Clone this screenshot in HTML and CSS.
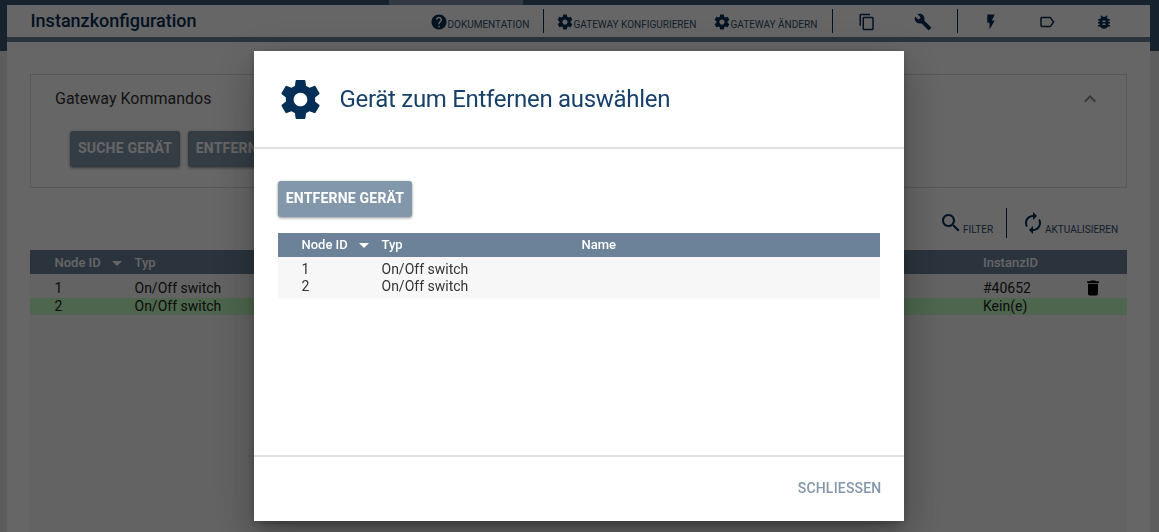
FILE: index.html
```html
<!DOCTYPE html>
<html lang="de">
<head>
<meta charset="utf-8">
<title>Instanzkonfiguration</title>
<link rel="stylesheet" href="styles.css">
</head>
<body>
<svg class="defs">
  <symbol id="gear" viewBox="0 0 24 24"><path d="M19.43 12.98c.04-.32.07-.64.07-.98s-.03-.66-.07-.98l2.11-1.65c.19-.15.24-.42.12-.64l-2-3.46c-.12-.22-.39-.3-.61-.22l-2.49 1c-.52-.4-1.08-.73-1.69-.98l-.38-2.65C14.46 2.18 14.25 2 14 2h-4c-.25 0-.46.18-.49.42l-.38 2.65c-.61.25-1.17.59-1.69.98l-2.49-1c-.23-.09-.49 0-.61.22l-2 3.46c-.13.22-.07.49.12.64l2.11 1.65c-.04.32-.07.65-.07.98s.03.66.07.98l-2.11 1.65c-.19.15-.24.42-.12.64l2 3.46c.12.22.39.3.61.22l2.49-1c.52.4 1.08.73 1.69.98l.38 2.65c.03.24.24.42.49.42h4c.25 0 .46-.18.49-.42l.38-2.65c.61-.25 1.17-.59 1.69-.98l2.49 1c.23.09.49 0 .61-.22l2-3.46c.12-.22.07-.49-.12-.64l-2.11-1.65zM12 15.5c-1.93 0-3.5-1.57-3.5-3.5s1.57-3.5 3.5-3.5 3.5 1.57 3.5 3.5-1.57 3.5-3.5 3.5z"/></symbol>
  <symbol id="help" viewBox="0 0 24 24"><path d="M12 2C6.48 2 2 6.48 2 12s4.480 10 10 10 10-4.480 10-10S17.520 2 12 2zm1 17h-2v-2h2v2zm2.070-7.750l-.9.920C13.450 12.900 13 13.500 13 15h-2v-.5c0-1.100.450-2.100 1.170-2.830l1.240-1.260c.370-.360.590-.860.590-1.410 0-1.100-.9-2-2-2s-2 .9-2 2H8c0-2.210 1.790-4 4-4s4 1.790 4 4c0 .880-.360 1.680-.930 2.250z"/></symbol>
  <symbol id="copy" viewBox="0 0 24 24"><path d="M16 1H4c-1.100 0-2 .9-2 2v14h2V3h12V1zm3 4H8c-1.100 0-2 .9-2 2v14c0 1.100.9 2 2 2h11c1.100 0 2-.9 2-2V7c0-1.100-.9-2-2-2zm0 16H8V7h11v14z"/></symbol>
  <symbol id="wrench" viewBox="0 0 24 24"><path d="M22.700 19l-9.100-9.100c.9-2.300.4-5-1.500-6.900-2-2-5-2.400-7.400-1.300L9 6 6 9 1.600 4.700C.4 7.100.9 10.100 2.900 12.100c1.900 1.900 4.600 2.400 6.900 1.500l9.100 9.100c.4.4 1 .4 1.400 0l2.300-2.300c.5-.4.5-1.100.1-1.400z"/></symbol>
  <symbol id="flash" viewBox="0 0 24 24"><path d="M7 2v11h3v9l7-12h-4l4-8z"/></symbol>
  <symbol id="label" viewBox="0 0 24 24"><path d="M17.630 5.840C17.270 5.330 16.670 5 16 5L5 5.010C3.900 5.010 3 5.900 3 7v10c0 1.100.9 1.990 2 1.990L16 19c.670 0 1.270-.330 1.630-.840L22 12l-4.370-6.160zM16 17H5V7h11l3.550 5L16 17z"/></symbol>
  <symbol id="bug" viewBox="0 0 24 24"><path d="M20 8h-2.810c-.45-.78-1.070-1.450-1.820-1.960L17 4.410 15.590 3l-2.170 2.170C12.960 5.060 12.490 5 12 5s-.96.060-1.410.170L8.410 3 7 4.410l1.620 1.630C7.880 6.550 7.260 7.220 6.810 8H4v2h2.090c-.05.33-.09.66-.09 1v1H4v2h2v1c0 .34.040.67.09 1H4v2h2.810c1.040 1.790 2.970 3 5.190 3s4.150-1.210 5.190-3H20v-2h-2.090c.05-.33.09-.66.09-1v-1h2v-2h-2v-1c0-.34-.04-.67-.09-1H20V8zm-6 8h-4v-2h4v2zm0-4h-4v-2h4v2z"/></symbol>
  <symbol id="up" viewBox="0 0 24 24"><path d="M12 8l-6 6 1.410 1.410L12 10.830l4.590 4.580L18 14z"/></symbol>
  <symbol id="search" viewBox="0 0 24 24"><path d="M15.500 14h-.79l-.28-.27C15.410 12.590 16 11.110 16 9.500 16 5.910 13.090 3 9.500 3S3 5.910 3 9.500 5.910 16 9.500 16c1.610 0 3.090-.59 4.230-1.570l.27.28v.79l5 4.990L20.490 19l-4.990-5zm-6 0C7.010 14 5 11.990 5 9.500S7.010 5 9.500 5 14 7.010 14 9.500 11.990 14 9.500 14z"/></symbol>
  <symbol id="renew" viewBox="0 0 24 24"><path d="M12 6v3l4-4-4-4v3c-4.420 0-8 3.580-8 8 0 1.570.46 3.030 1.240 4.260L6.700 14.800c-.45-.83-.7-1.790-.7-2.800 0-3.310 2.690-6 6-6zm6.760 1.740L17.300 9.200c.44.84.7 1.790.7 2.800 0 3.310-2.690 6-6 6v-3l-4 4 4 4v-3c4.420 0 8-3.580 8-8 0-1.570-.46-3.030-1.240-4.260z"/></symbol>
  <symbol id="trash" viewBox="0 0 24 24"><path d="M6 19c0 1.100.9 2 2 2h8c1.100 0 2-.9 2-2V7H6v12zM19 4h-3.500l-1-1h-5l-1 1H5v2h14V4z"/></symbol>
</svg>

<div class="app">
  <div class="tabs"><div class="tab"></div></div>
  <main class="page">
    <header class="titlebar">
      <h1 class="title">Instanzkonfiguration</h1>
      <nav class="toolbar">
        <a class="tool doc"><svg class="i18"><use href="#help"/></svg><span>DOKUMENTATION</span></a>
        <a class="tool conf"><svg class="i18"><use href="#gear"/></svg><span>GATEWAY KONFIGURIEREN</span></a>
        <a class="tool change"><svg class="i18"><use href="#gear"/></svg><span>GATEWAY ÄNDERN</span></a>
        <a class="tool square sep"><svg class="i18"><use href="#copy"/></svg></a>
        <a class="tool square wr"><svg class="i18"><use href="#wrench"/></svg></a>
        <a class="tool square sep fl"><svg class="i18"><use href="#flash"/></svg></a>
        <a class="tool square"><svg class="i18"><use href="#label"/></svg></a>
        <a class="tool square"><svg class="i18"><use href="#bug"/></svg></a>
      </nav>
    </header>
    <section class="panel">
      <div class="panel-head"><span>Gateway Kommandos</span><svg class="i24"><use href="#up"/></svg></div>
      <div class="buttons"><button class="btn search-btn">SUCHE GERÄT</button><button class="btn remove-btn">ENTFERNE GERÄT</button></div>
    </section>
    <div class="actions">
      <a class="action filter"><svg class="i24"><use href="#search"/></svg><span>FILTER</span></a>
      <a class="action refresh"><svg class="i24"><use href="#renew"/></svg><span>AKTUALISIEREN</span></a>
    </div>
    <section class="list">
      <div class="row head"><span class="node">Node ID<i class="sort"></i></span><span class="type">Typ</span><span>InstanzID</span></div>
      <div class="row first"><span>1</span><span>On/Off switch</span><span>#40652</span><svg class="i20"><use href="#trash"/></svg></div>
      <div class="row created"><span>2</span><span>On/Off switch</span><span>Kein(e)</span></div>
    </section>
  </main>
</div>

<div class="overlay">
  <div class="dialog">
    <header class="dialog-head"><svg class="i48"><use href="#gear"/></svg><h2 class="dialog-title">Gerät zum Entfernen auswählen</h2></header>
    <div class="dialog-body">
      <button class="btn dialog-btn">ENTFERNE GERÄT</button>
      <div class="table">
        <div class="row head"><span class="node">Node ID<i class="sort"></i></span><span>Typ</span><span>Name</span></div>
        <div class="row"><span>1</span><span>On/Off switch</span></div>
        <div class="row"><span>2</span><span>On/Off switch</span></div>
      </div>
    </div>
    <footer class="dialog-foot"><button class="close">SCHLIESSEN</button></footer>
  </div>
</div>
</body>
</html>
```
FILE: styles.css
```css
* { box-sizing: border-box; }
body { margin: 0; height: 532px; overflow: hidden; font-family: Roboto, "Liberation Sans", sans-serif; color: #333; }
svg { fill: currentColor; flex: none; display: block; }
.defs { display: none; }
.i18 { width: 18px; height: 18px; }
.i20 { width: 20px; height: 20px; }
.i24 { width: 24px; height: 24px; }
.i48 { width: 47px; height: 47px; }
button { border: 0; padding: 0; font-family: inherit; }

.app { height: 532px; padding: 0 9px 0 7px; background: linear-gradient(#385673 51px, #e8e8e8 51px); }
.tabs { height: 5px; padding-left: 382px; }
.tab { width: 134px; height: 5px; background: #7b91a6; }
.page { height: 527px; background: #fff; display: flex; flex-direction: column; }
.titlebar { height: 37px; flex: none; border-bottom: 5px solid #6b8299; display: flex; justify-content: space-between; padding: 0 17.5px 0 23.5px; color: #042e55; }
.title { margin: 0; font-size: 18px; font-weight: 500; line-height: 32px; }
.toolbar { display: flex; padding: 4px 0; }
.tool { display: flex; flex: none; height: 24px; padding-top: 3.5px; font-size: 10px; line-height: 24px; white-space: nowrap; }
.tool span { padding-top: 0.5px; color: #2b4e70; }
.doc { width: 113px; }
.conf { width: 170px; border-left: 1px solid #042e55; padding-left: 12px; }
.change { width: 119px; }
.square { width: 57px; justify-content: center; }
.sep { width: 69px; border-left: 1px solid #042e55; }
.wr { width: 56px; padding-right: 12px; }
.fl { width: 62px; padding-left: 5px; }

.panel { height: 114px; flex: none; margin: 32px 23px 0; border: 1px solid #dcdcdc; }
.panel-head { height: 48px; display: flex; justify-content: space-between; align-items: center; padding: 0 24px; font-size: 16px; line-height: 18px; }
.panel-head span { margin-bottom: 1px; }
.panel-head svg { color: #8c8c8c; }
.buttons { display: flex; gap: 8px; padding: 8px 0 0 39px; }
.btn { display: block; height: 36px; border-radius: 3px; background: #8397ab; color: #fff; font-size: 14px; font-weight: 700; line-height: 34px; letter-spacing: 0.2px; padding-bottom: 2px; box-shadow: 0 1px 3px rgba(0,0,0,.45); white-space: nowrap; }
.search-btn { width: 110px; }
.remove-btn { width: 134px; }
.actions { height: 62px; flex: none; display: flex; justify-content: flex-end; padding: 20px 32px 12px 0; color: #042e55; }
.action { display: flex; font-size: 10px; padding-top: 3px; }
.action span { padding-top: 13px; line-height: 12px; color: #2b4e70; }
.filter { width: 67px; }
.refresh { width: 112px; border-left: 1px solid #042e55; padding-left: 14px; }
.list { flex: 1; margin: 0 23px; background: #f7f7f7; }
.row { display: grid; grid-template-columns: 80px 200px 1fr; padding-left: 23.5px; height: 17px; line-height: 17px; font-size: 14px; }
.row.head { height: 24px; line-height: 24px; background: #6b8299; color: #fff; font-size: 13px; font-weight: 500; }
.list .row { grid-template-columns: 80px 848.5px 104px 1fr; padding-left: 24.5px; color: #222; }
.list .row.head { color: #fff; line-height: 26px; }
.list .first { height: 24px; line-height: 29px; }
.first svg { color: #000; margin: 4px 0 0 -4px; }
.list .created { background: #c0ffc0; }
.node { display: flex; align-items: center; gap: 11px; }
.sort { border: 5px solid transparent; border-top-color: currentColor; border-bottom: 0; }

.overlay { position: fixed; inset: 0; background: rgba(0,0,0,.6); padding: 51px 255px 11px 254px; }
.dialog { height: 470px; background: #fff; display: flex; flex-direction: column; box-shadow: 0 11px 15px -7px rgba(0,0,0,.2), 0 24px 38px 3px rgba(0,0,0,.14), 0 9px 46px 8px rgba(0,0,0,.12), 0 2px 8px rgba(0,0,0,.2); }
.dialog-head { height: 98px; display: flex; align-items: center; gap: 15px; padding-left: 23px; border-bottom: 2px solid #e0e0e0; color: #042e55; }
.dialog-title { margin: 0; padding-left: 0.5px; font-size: 24px; font-weight: 400; letter-spacing: -0.3px; color: #17406a; }
.dialog-body { flex: 1; padding: 32px 24px; }
.dialog-btn { width: 134px; margin-bottom: 16px; }
.table { background: #f7f7f7; height: 66px; }
.table .head { margin-bottom: 4px; }
.dialog-foot { height: 66px; border-top: 2px solid #e0e0e0; display: flex; align-items: center; justify-content: flex-end; padding-right: 22.5px; }
.close { background: none; color: #8397ab; font-size: 14px; font-weight: 500; line-height: 18px; letter-spacing: 0.2px; margin-bottom: 2px; }
```
